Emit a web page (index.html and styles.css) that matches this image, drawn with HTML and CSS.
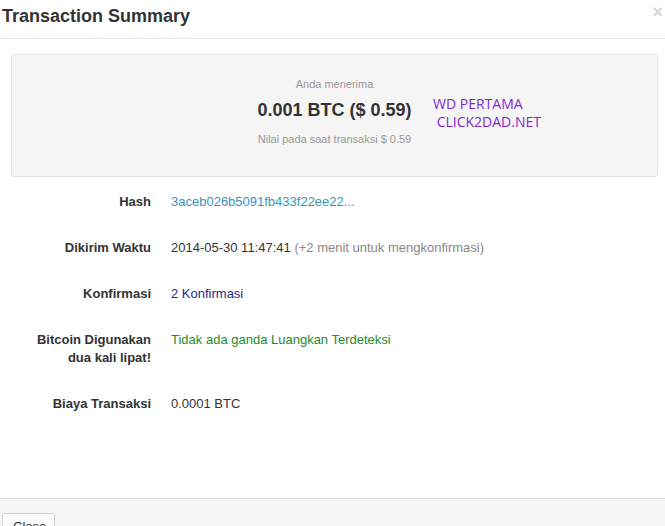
FILE: index.html
```html
<!DOCTYPE html>
<html>
<head>
<meta charset="utf-8">
<link rel="stylesheet" href="styles.css">
</head>
<body>
<div class="modal">
  <div class="modal-header">
    <h3 class="title">Transaction Summary</h3>
    <span class="close">×</span>
  </div>
  <div class="modal-body">
    <div class="well">
      <div class="small">Anda menerima</div>
      <div class="amount">0.001 BTC ($ 0.59)</div>
      <div class="small">Nilai pada saat transaksi $ 0.59</div>
      <div class="overlay">WD PERTAMA<br>&nbsp;CLICK2DAD.NET</div>
    </div>
    <div class="rows">
      <div class="label">Hash</div>
      <div class="value link">3aceb026b5091fb433f22ee22...</div>
      <div class="label">Dikirim Waktu</div>
      <div class="value">2014-05-30 11:47:41 <span class="muted">(+2 menit untuk mengkonfirmasi)</span></div>
      <div class="label">Konfirmasi</div>
      <div class="value navy">2 Konfirmasi</div>
      <div class="label">Bitcoin Digunakan<br>dua kali lipat!</div>
      <div class="value green">Tidak ada ganda Luangkan Terdeteksi</div>
      <div class="label">Biaya Transaksi</div>
      <div class="value">0.0001 BTC</div>
    </div>
  </div>
  <div class="modal-footer">
    <button class="btn">Close</button>
  </div>
</div>
</body>
</html>
```
FILE: styles.css
```css
html, body {
  margin: 0;
  padding: 0;
  background: #fff;
  overflow: hidden;
}
body {
  font-family: "Liberation Sans", Arial, sans-serif;
  color: #333;
  width: 665px;
  height: 526px;
}
.modal {
  display: flex;
  flex-direction: column;
  height: 526px;
}
.modal-header {
  position: relative;
  height: 38px;
  border-bottom: 1px solid #e5e5e5;
  padding-left: 2px;
}
.title {
  margin: 0;
  padding-top: 5px;
  font-size: 18px;
  line-height: 22px;
  font-weight: bold;
  color: #333;
}
.close {
  position: absolute;
  right: 2px;
  top: 2px;
  font-size: 18px;
  font-weight: bold;
  color: #d4d4d4;
  line-height: 20px;
}
.modal-body {
  flex: 1;
  padding: 15px 7px 0 11px;
}
.well {
  position: relative;
  height: 123px;
  background: #f5f5f5;
  border: 1px solid #e3e3e3;
  border-radius: 3px;
  display: flex;
  flex-direction: column;
  align-items: center;
  padding-top: 22px;
  box-sizing: border-box;
}
.small {
  font-size: 11px;
  color: #999;
  line-height: 14px;
}
.amount {
  font-size: 18px;
  font-weight: bold;
  color: #333;
  line-height: 22px;
  margin: 8px 0 11px;
}
.overlay {
  position: absolute;
  left: 421px;
  top: 40px;
  font-family: "Open Sans", "Liberation Sans", sans-serif;
  font-size: 14px;
  line-height: 18px;
  color: #8228d2;
  letter-spacing: 0px;
}
.rows {
  display: grid;
  grid-template-columns: 140px 1fr;
  column-gap: 20px;
  row-gap: 28px;
  margin-top: 16px;
  font-size: 13px;
  line-height: 18px;
}
.label {
  text-align: right;
  font-weight: bold;
  color: #333;
}
.value { color: #333; }
.link { color: #3a94b5; }
.navy { color: #1f2a8c; }
.green { color: #278a2a; }
.muted { color: #888; }
.modal-footer {
  flex: none;
  height: 28px;
  border-top: 1px solid #ddd;
  background: #f5f5f5;
  padding: 14px 0 0 2px;
  box-sizing: border-box;
  overflow: hidden;
}
.btn {
  font-family: "Liberation Sans", Arial, sans-serif;
  font-size: 13px;
  color: #333;
  background: #fbfbfb;
  border: 1px solid #d5d5d5;
  border-radius: 3px;
  padding: 4px 10px;
  width: 53px;
  line-height: 18px;
}
```
